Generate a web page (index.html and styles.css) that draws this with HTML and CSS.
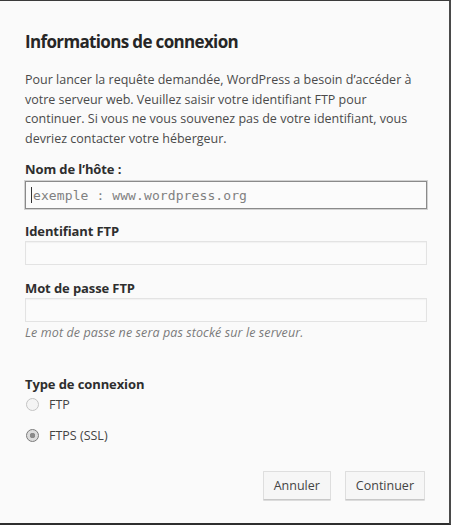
FILE: index.html
```html
<!DOCTYPE html>
<html lang="fr">
<head>
<meta charset="utf-8">
<title>Informations de connexion</title>
<link rel="stylesheet" href="styles.css">
</head>
<body>
<div class="dialog">
  <h2 class="title">Informations de connexion</h2>
  <p class="intro">Pour lancer la requête demandée, WordPress a besoin d’accéder à votre serveur web. Veuillez saisir votre identifiant FTP pour continuer. Si vous ne vous souvenez pas de votre identifiant, vous devriez contacter votre hébergeur.</p>

  <label class="label first">Nom de l’hôte :</label>
  <div class="input focus"><span class="caret"></span><span class="ph">exemple : www.wordpress.org</span></div>

  <label class="label second">Identifiant FTP</label>
  <div class="input"></div>

  <label class="label third">Mot de passe FTP</label>
  <div class="input"></div>
  <p class="note">Le mot de passe ne sera pas stocké sur le serveur.</p>

  <div class="ctype">
    <div class="label">Type de connexion</div>
    <div class="radio-row"><span class="radio"></span><span>FTP</span></div>
    <div class="radio-row second"><span class="radio checked"></span><span>FTPS (SSL)</span></div>
  </div>

  <div class="actions">
    <button class="btn">Annuler</button>
    <button class="btn">Continuer</button>
  </div>
</div>
</body>
</html>
```
FILE: styles.css
```css
* { box-sizing: border-box; }
html, body { margin: 0; padding: 0; background: #fafafa; }
body {
  font-family: "Open Sans", "Noto Sans", sans-serif;
  color: #3a3a3a;
  font-size: 13px;
}
.dialog {
  width: 451px;
  height: 525px;
  border-top: 1px solid #3a3a3a;
  border-right: 2px solid #4a4a4a;
  border-bottom: 2px solid #2e2e2e;
  background: #fafafa;
  padding: 24px 22px 0 25px;
  display: flex;
  flex-direction: column;
}
.title {
  margin: 5px 0 0 0;
  font-size: 17px;
  font-weight: 700;
  color: #262626;
  line-height: 24px;
  letter-spacing: -0.65px;
}
.intro {
  margin: 16px 0 0 0;
  line-height: 19.5px;
  font-size: 12.5px;
  color: #4a4a4a;
  letter-spacing: 0;
  width: 402px;
}
.label {
  display: block;
  font-weight: 700;
  font-size: 13px;
  color: #2e2e2e;
  line-height: 18px;
  letter-spacing: -0.1px;
}
.label.first { margin-top: 12px; }
.label.second { margin-top: 13px; }
.label.third { margin-top: 14px; }
.input {
  margin-top: 1px;
  width: 402px;
  height: 24px;
  border: 1px solid #e3e3e3;
  background: #fbfbfb;
  box-shadow: inset 0 1px 1px rgba(0,0,0,0.04);
  display: flex;
  align-items: center;
  padding-left: 5px;
}
.input.focus {
  margin-top: 3px;
  height: 28px;
  border: 1px solid #8a8a8a;
  box-shadow: 0 0 0 1px #d2d2d2;
}
.caret {
  width: 1px;
  height: 16px;
  background: #333;
  margin-right: 1px;
}
.ph {
  font-family: "DejaVu Sans Mono", "Liberation Mono", monospace;
  font-size: 13px;
  color: #808080;
  letter-spacing: 0.1px;
}
.note {
  margin: 3px 0 0 0;
  font-style: italic;
  font-size: 12.5px;
  color: #7a7a7a;
  line-height: 16px;
  letter-spacing: 0.1px;
}
.ctype { margin-top: 34px; }
.ctype .label { margin-top: 0; }
.radio-row {
  display: flex;
  align-items: center;
  gap: 10px;
  margin-top: 2px;
  font-size: 12.5px;
  color: #444;
  height: 18px;
  padding-left: 1px;
}
.radio-row.second { margin-top: 13px; }
.radio {
  width: 13px;
  height: 13px;
  border-radius: 50%;
  border: 1px solid #c4c4c4;
  background: #f4f4f4;
  display: inline-block;
}
.radio.checked {
  border-color: #7a7a7a;
  background: radial-gradient(circle, #8a8a8a 0 2.5px, #dcdcdc 3px);
}
.actions {
  display: flex;
  justify-content: flex-end;
  gap: 14px;
  margin-top: 27px;
  padding-right: 2px;
}
.btn {
  font-family: inherit;
  font-size: 12.5px;
  color: #444;
  background: #f6f6f6;
  border: 1px solid #dedede;
  border-bottom-color: #c8c8c8;
  box-shadow: 0 1px 0 #dcdcdc;
  height: 29px;
  padding: 0 10px;
  border-radius: 1px;
}
```
